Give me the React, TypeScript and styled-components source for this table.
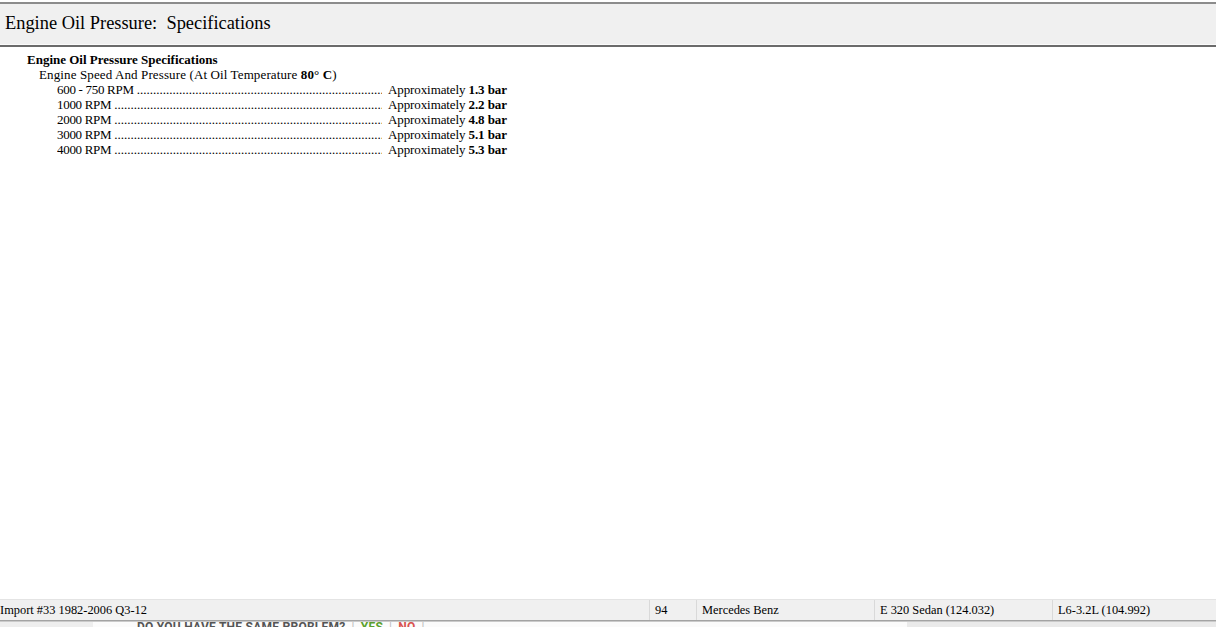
import React from "react";
import styled, { createGlobalStyle } from "styled-components";

const Global = createGlobalStyle`
  html, body { margin: 0; padding: 0; background: #ffffff; }
  body { font-family: "Liberation Serif", "Times New Roman", serif; color: #000; }
  #root { height: 627px; }
`;

const Page = styled.div`
  height: 627px;
  display: flex;
  flex-direction: column;
  overflow: hidden;
`;

const Header = styled.div`
  margin-top: 2px;
  border-top: 2px solid #8c8c8c;
  border-bottom: 2px solid #6b6b6b;
  box-shadow: inset 0 -1px 0 #fbfbfb;
  background: #f0f0f0;
  height: 45px;
  flex: none;
  box-sizing: border-box;
  padding: 0 0 3px 5px;
  display: flex;
  align-items: center;
  font-size: 18.4px;
  white-space: pre;
`;

const Content = styled.div`
  flex: 1;
  padding-top: 5px;
  font-size: 13px;
  line-height: 15px;
`;

const Line = styled.div<{ $indent: number; $bold?: boolean; $track?: number }>`
  padding-left: ${(p) => p.$indent}px;
  font-weight: ${(p) => (p.$bold ? "bold" : "normal")};
  letter-spacing: ${(p) => p.$track ?? 0}px;
  white-space: nowrap;
`;

const Row = styled.div`
  display: flex;
  padding-left: 57px;
  white-space: nowrap;
`;

const Label = styled.span`
  letter-spacing: -0.3px;
`;

const Leader = styled.div`
  display: flex;
  width: 325px;
  overflow: hidden;
`;

const Dots = styled.span`
  flex: 1;
  overflow: hidden;
  padding-left: 3px;
  &::after {
    content: "................................................................................................................................................................";
  }
`;

const Value = styled.span`
  padding-left: 6px;
  letter-spacing: -0.1px;
`;

const StatusBar = styled.div`
  height: 20px;
  flex: none;
  border-top: 1px solid #e4e4e4;
  border-bottom: 1px solid #a3a3a3;
  box-shadow: 0 1px 0 #cacaca;
  background: #f0f0f0;
  display: flex;
  font-size: 12.4px;
  line-height: 21px;
`;

const Field = styled.div<{ $w?: number; $first?: boolean }>`
  ${(p) => (p.$w ? `width: ${p.$w}px;` : "flex: 1;")}
  box-sizing: border-box;
  padding-left: ${(p) => (p.$first ? 0 : 5)}px;
  border-left: ${(p) => (p.$first ? "none" : "1px solid #d9d9d9")};
  white-space: nowrap;
  overflow: hidden;
`;

const Behind = styled.div`
  height: 5px;
  flex: none;
  margin-top: 1px;
  display: flex;
  background: #f3f3f3;
  overflow: hidden;
`;

const BehindLeft = styled.div`
  width: 93px;
  background: #eeeeee;
`;

const BehindMid = styled.div`
  width: 814px;
  background: #fbfbfb;
  display: flex;
  align-items: flex-start;
  padding-left: 44px;
  box-sizing: border-box;
  font-family: "Roboto", "Liberation Sans", sans-serif;
  font-weight: bold;
  font-size: 12px;
  line-height: 12px;
  letter-spacing: 0.25px;
  color: #555;
  gap: 6px;
`;

const Ask = styled.span<{ $c?: string }>`
  color: ${(p) => p.$c ?? "#555"};
  margin-top: -1px;
`;

const Bar = styled.span`
  color: #bbb;
  font-weight: normal;
  margin-top: -1px;
`;

const BehindRight = styled.div`
  flex: 1;
  background: #eaeaea;
`;

const rows: [string, string][] = [
  ["600 - 750 RPM", "1.3 bar"],
  ["1000 RPM", "2.2 bar"],
  ["2000 RPM", "4.8 bar"],
  ["3000 RPM", "5.1 bar"],
  ["4000 RPM", "5.3 bar"],
];

export default function App() {
  return (
    <Page>
      <Global />
      <Header>{"Engine Oil Pressure:  Specifications"}</Header>
      <Content>
        <Line $indent={27} $bold>
          Engine Oil Pressure Specifications
        </Line>
        <Line $indent={39} $track={0.12}>
          Engine Speed And Pressure (At Oil Temperature <b>80° C</b>)
        </Line>
        {rows.map(([l, v]) => (
          <Row key={l}>
            <Leader>
              <Label>{l}</Label>
              <Dots />
            </Leader>
            <Value>
              Approximately <b>{v}</b>
            </Value>
          </Row>
        ))}
      </Content>
      <StatusBar>
        <Field $w={649} $first>
          Import #33 1982-2006 Q3-12
        </Field>
        <Field $w={47}>94</Field>
        <Field $w={178}>Mercedes Benz</Field>
        <Field $w={178}>E 320 Sedan (124.032)</Field>
        <Field>L6-3.2L (104.992)</Field>
      </StatusBar>
      <Behind>
        <BehindLeft />
        <BehindMid>
          <Ask>DO YOU HAVE THE SAME PROBLEM?</Ask>
          <Bar>|</Bar>
          <Ask $c="#5aa02c">YES</Ask>
          <Bar>|</Bar>
          <Ask $c="#d9534f">NO</Ask>
          <Bar>|</Bar>
        </BehindMid>
        <BehindRight />
      </Behind>
    </Page>
  );
}
